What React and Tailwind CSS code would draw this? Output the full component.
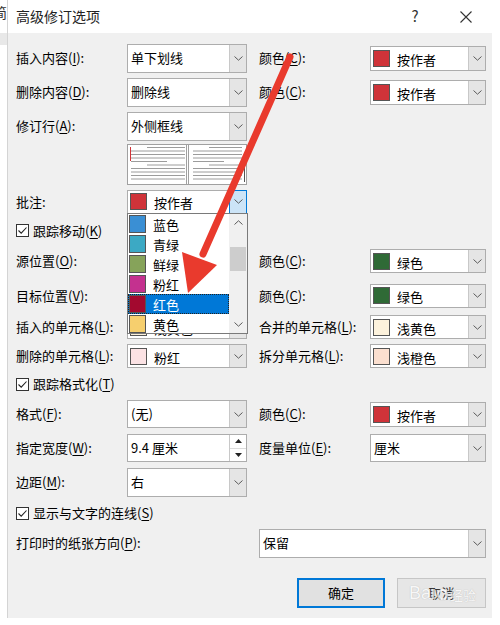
import React from 'react';

const FONT = "font-['Noto_Sans_CJK_SC','Microsoft_YaHei',sans-serif]";

function Chevron({ up = false }) {
  return (
    <svg width="9" height="5" viewBox="0 0 9 5">
      <path
        d={up ? 'M0.5 4.5L4.5 0.8L8.5 4.5' : 'M0.5 0.5L4.5 4.2L8.5 0.5'}
        fill="none"
        stroke="#5a5a5a"
        strokeWidth="1"
      />
    </svg>
  );
}

function Key({ children }) {
  return <span className="underline underline-offset-2">{children}</span>;
}

// combo box, optionally with a colour swatch
function Select({ value, swatch, w = 'w-[120px]', h = 'h-[29px]', active = false, children }) {
  return (
    <div className={`relative ${w} ${h} flex border border-[#adadad] bg-white`}>
      <div className="flex-1 flex items-center pl-[2px] gap-[7px] overflow-hidden">
        {swatch && <span className={`w-[17px] h-[17px] shrink-0 border border-[#555] ${swatch}`} />}
        {value && <span className={swatch ? 'mt-[3px]' : 'pl-[1px]'}>{value}</span>}
      </div>
      {active ? (
        <div className="w-[18px] -my-px -mr-px flex items-center justify-center border border-[#0078d7] bg-[#cce4f7]">
          <Chevron />
        </div>
      ) : (
        <div className="w-[17px] flex items-center justify-center border-l border-[#c8c8c8] bg-[#e5e5e5]">
          <Chevron />
        </div>
      )}
      {children}
    </div>
  );
}

function Check({ children }) {
  return (
    <div className="flex items-center gap-[4px]">
      <span className="w-[13px] h-[13px] border border-[#333] bg-white flex items-center justify-center">
        <svg width="11" height="11" viewBox="0 0 11 11">
          <path d="M1.5 5.5L4.2 8.2L9.5 2.5" fill="none" stroke="#222" strokeWidth="1.1" />
        </svg>
      </span>
      <span>{children}</span>
    </div>
  );
}

function Row({ h, left, leftCtl, right, rightCtl }) {
  return (
    <div className={`flex items-center ${h}`}>
      <div className="w-[111px]">{left}</div>
      <div className="w-[120px]">{leftCtl}</div>
      <div className="w-[12px]" />
      <div className="w-[111px]">{right}</div>
      <div className="w-[116px]">{rightCtl}</div>
    </div>
  );
}

const listItems = [
  { name: '蓝色', sw: 'bg-[#3a8fd4]' },
  { name: '青绿', sw: 'bg-[#3ca9c4]' },
  { name: '鲜绿', sw: 'bg-[#86a35a]' },
  { name: '粉红', sw: 'bg-[#c4318f]' },
  { name: '红色', sw: 'bg-[#a3092f]', selected: true },
  { name: '黄色', sw: 'bg-[#f6cf6e]' },
];

function ColorList() {
  return (
    <div className="absolute z-10 left-[-1px] top-[22px] w-[121px] h-[121px] flex border border-[#7a7a7a] bg-white">
      <div className="flex-1 flex flex-col">
        {listItems.map((it) => (
          <div
            key={it.name}
            className={`h-[20px] flex items-center gap-[7px] pl-[1px] ${
              it.selected ? 'bg-[#0078d7] text-white outline-1 outline-dotted outline-[#222] -outline-offset-1' : ''
            }`}
          >
            <span className={`w-[17px] h-[18px] border border-[#555] ${it.sw}`} />
            <span className="mt-[2px]">{it.name}</span>
          </div>
        ))}
      </div>
      <div className="w-[18px] flex flex-col bg-[#f0f0f0]">
        <div className="h-[17px] flex items-center justify-center">
          <Chevron up />
        </div>
        <div className="flex-1">
          <div className="mt-[16px] mx-[1px] h-[24px] bg-[#cdcdcd]" />
        </div>
        <div className="h-[17px] flex items-center justify-center">
          <Chevron />
        </div>
      </div>
    </div>
  );
}

function Preview() {
  const g = '#9c9c9c';
  const L = [
    [20, 58, 3.5], [4, 58, 7], [4, 58, 10.5], [4, 58, 14], [4, 40, 17.5],
    [20, 58, 21], [4, 58, 24.5], [4, 58, 28], [4, 58, 31.5], [4, 58, 35],
  ];
  return (
    <svg width="120" height="41" viewBox="0 0 120 41" className="block">
      <rect x="0.5" y="0.5" width="119" height="40" fill="#fff" stroke="#a0a0a0" />
      <line x1="59.5" y1="0" x2="59.5" y2="41" stroke="#a0a0a0" />
      <line x1="61.5" y1="0" x2="61.5" y2="41" stroke="#a0a0a0" />
      {L.map(([a, b, y], i) => (
        <line key={'l' + i} x1={a} y1={y} x2={b} y2={y} stroke={g} />
      ))}
      {L.map(([a, b, y], i) => (
        <line key={'r' + i} x1={a + 62} y1={y} x2={b + 57} y2={y} stroke={g} />
      ))}
      <line x1="3.5" y1="3" x2="3.5" y2="17" stroke="#d13438" />
      <line x1="117.5" y1="20" x2="117.5" y2="38" stroke="#555" />
    </svg>
  );
}

function Spin({ value }) {
  return (
    <div className="w-[120px] h-[28px] flex border border-[#adadad] bg-white">
      <div className="flex-1 flex items-center pl-[3px]">{value}</div>
      <div className="w-[17px] flex flex-col border-l border-[#c8c8c8]">
        <div className="flex-1 flex items-center justify-center border-b border-[#dcdcdc]">
          <svg width="7" height="4" viewBox="0 0 7 4"><path d="M0 4L3.5 0L7 4Z" fill="#222" /></svg>
        </div>
        <div className="flex-1 flex items-center justify-center">
          <svg width="7" height="4" viewBox="0 0 7 4"><path d="M0 0L3.5 4L7 0Z" fill="#222" /></svg>
        </div>
      </div>
    </div>
  );
}

export default function App() {
  const red = 'bg-[#cf3339]';
  const green = 'bg-[#2f6a36]';
  return (
    <div className={`relative w-[500px] h-[625px] bg-white overflow-hidden text-[13px] text-black ${FONT}`}>
      <div className="flex">
        {/* window behind */}
        <div className="w-[7px] flex flex-col">
          <div className="h-[33px] overflow-hidden relative">
            <span className="absolute left-[-7px] top-[2px] text-[14px] text-[#333]">简</span>
          </div>
          <div className="h-[12px] bg-[#e8e8e8]" />
        </div>

        {/* dialog */}
        <div className="w-[485px] h-[618px] flex flex-col bg-[#f0f0f0] border-l border-[#d4d4d4]">
          <div className="h-[33px] flex items-center bg-white pl-[8px] pr-[3px]">
            <div className="flex-1 text-[14px] text-[#222]">高级修订选项</div>
            <div className="w-[46px] text-center text-[15px] text-[#333]">?</div>
            <div className="w-[5px]" />
            <div className="w-[46px] flex justify-center">
              <svg width="12" height="12" viewBox="0 0 12 12">
                <path d="M0.5 0.5L11.5 11.5M11.5 0.5L0.5 11.5" stroke="#333" strokeWidth="1.1" />
              </svg>
            </div>
          </div>

          <div className="flex flex-col pl-[8px] pt-[8px]">
            <Row
              h="h-[34px]"
              left={<span>插入内容(<Key>I</Key>):</span>}
              leftCtl={<Select value="单下划线" />}
              right={<span>颜色(<Key>C</Key>):</span>}
              rightCtl={<Select value="按作者" swatch={red} w="w-[116px]" h="h-[25px]" />}
            />
            <Row
              h="h-[34px]"
              left={<span>删除内容(<Key>D</Key>):</span>}
              leftCtl={<Select value="删除线" />}
              right={<span>颜色(<Key>C</Key>):</span>}
              rightCtl={<Select value="按作者" swatch={red} w="w-[116px]" h="h-[25px]" />}
            />
            <Row
              h="h-[34px]"
              left={<span>修订行(<Key>A</Key>):</span>}
              leftCtl={<Select value="外侧框线" />}
            />
            <div className="flex h-[43px] pt-[1px]">
              <div className="w-[111px]" />
              <Preview />
            </div>
            <div className="relative z-10">
              <Row
                h="h-[31px]"
                left={<span>批注:</span>}
                leftCtl={
                  <Select value="按作者" swatch={red} h="h-[24px]" active>
                    <ColorList />
                  </Select>
                }
              />
            </div>
            <div className="h-[27px] flex items-center">
              <Check>跟踪移动(<Key>K</Key>)</Check>
            </div>
            <Row
              h="h-[34px]"
              left={<span>源位置(<Key>O</Key>):</span>}
              leftCtl={<Select />}
              right={<span>颜色(<Key>C</Key>):</span>}
              rightCtl={<Select value="绿色" swatch={green} w="w-[116px]" h="h-[24px]" />}
            />
            <Row
              h="h-[35px]"
              left={<span>目标位置(<Key>V</Key>):</span>}
              leftCtl={<Select />}
              right={<span>颜色(<Key>C</Key>):</span>}
              rightCtl={<Select value="绿色" swatch={green} w="w-[116px]" h="h-[24px]" />}
            />
            <Row
              h="h-[28px]"
              left={<span>插入的单元格(<Key>L</Key>):</span>}
              leftCtl={<Select value="浅黄色" swatch="bg-[#fdf2dc]" h="h-[24px]" />}
              right={<span>合并的单元格(<Key>L</Key>):</span>}
              rightCtl={<Select value="浅黄色" swatch="bg-[#fdf2dc]" w="w-[116px]" h="h-[24px]" />}
            />
            <Row
              h="h-[30px]"
              left={<span>删除的单元格(<Key>L</Key>):</span>}
              leftCtl={<Select value="粉红" swatch="bg-[#fbe2e4]" h="h-[24px]" />}
              right={<span>拆分单元格(<Key>L</Key>):</span>}
              rightCtl={<Select value="浅橙色" swatch="bg-[#fbdfcf]" w="w-[116px]" h="h-[24px]" />}
            />
            <div className="h-[26px] flex items-center">
              <Check>跟踪格式化(<Key>T</Key>)</Check>
            </div>
            <Row
              h="h-[34px]"
              left={<span>格式(<Key>F</Key>):</span>}
              leftCtl={<Select value="(无)" h="h-[28px]" />}
              right={<span>颜色(<Key>C</Key>):</span>}
              rightCtl={<Select value="按作者" swatch={red} w="w-[116px]" h="h-[25px]" />}
            />
            <Row
              h="h-[34px]"
              left={<span>指定宽度(<Key>W</Key>):</span>}
              leftCtl={<Spin value="9.4 厘米" />}
              right={<span>度量单位(<Key>E</Key>):</span>}
              rightCtl={<Select value="厘米" w="w-[116px]" h="h-[28px]" />}
            />
            <Row
              h="h-[34px]"
              left={<span>边距(<Key>M</Key>):</span>}
              leftCtl={<Select value="右" />}
            />
            <div className="h-[28px] flex items-center">
              <Check>显示与文字的连线(<Key>S</Key>)</Check>
            </div>
            <div className="h-[32px] flex items-center">
              <div className="w-[243px]">打印时的纸张方向(<Key>P</Key>):</div>
              <Select value="保留" w="w-[227px]" h="h-[29px]" />
            </div>
            <div className="h-[19px]" />
            <div className="relative flex justify-end gap-[12px] w-[470px]">
              <div className="w-[88px] h-[30px] flex items-center justify-center border-2 border-[#0078d7] bg-[#e1e1e1]">
                确定
              </div>
              <div className="w-[89px] h-[30px] flex items-center justify-center border border-[#c6c6c6] bg-[#e6e6e6] text-[#333]">
                取消
              </div>
              <div className="absolute right-[10px] top-[6px] flex items-end gap-[2px] text-white opacity-70 [text-shadow:0_0_1px_#9a9a9a]">
                <span className="text-[18px] leading-none font-['Liberation_Sans',sans-serif]">Bai</span>
                <span className="w-[11px] h-[11px] rounded-full border-2 border-white mb-[2px] shadow-[0_0_1px_#9a9a9a]" />
                <span className="text-[13px] leading-none mb-[1px]">经验</span>
              </div>
            </div>
          </div>
        </div>
      </div>

      {/* red annotation arrow */}
      <svg className="absolute inset-0 pointer-events-none z-20" width="500" height="625" viewBox="0 0 500 625">
        <line x1="290" y1="57" x2="203" y2="254" stroke="#e93a2d" strokeWidth="7" strokeLinecap="round" />
        <polygon points="182,252 217,265 188,293" fill="#e93a2d" />
      </svg>
    </div>
  );
}
